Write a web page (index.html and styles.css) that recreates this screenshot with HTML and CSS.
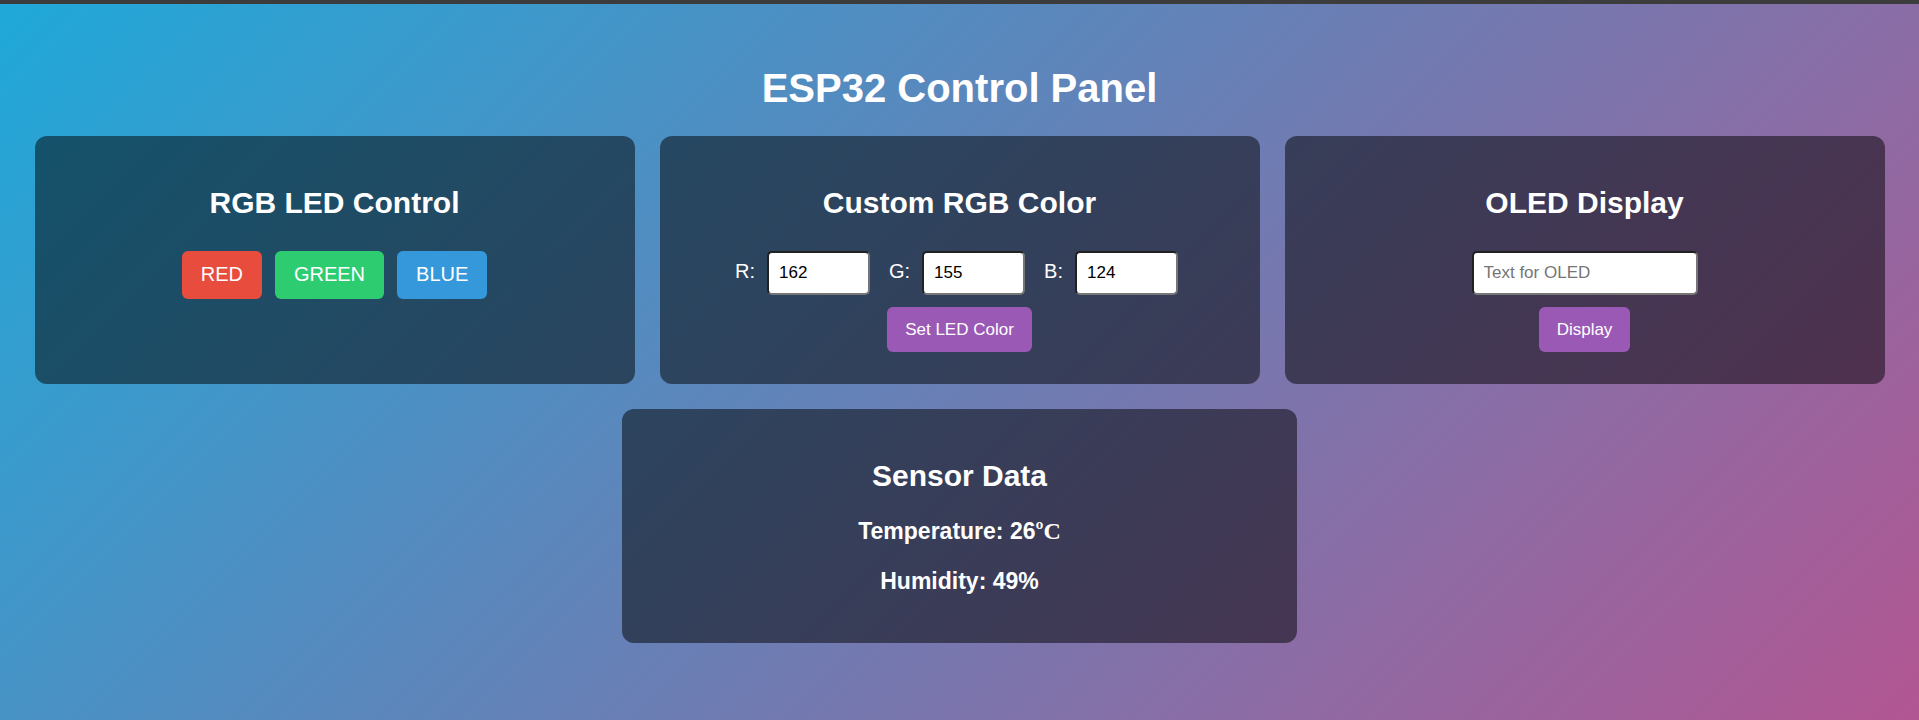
FILE: index.html
```html
<!DOCTYPE html>
<html lang="en">
<head>
<meta charset="utf-8">
<meta name="viewport" content="width=device-width, initial-scale=1">
<title>ESP32 Control Panel</title>
<link rel="stylesheet" href="styles.css">
</head>
<body>
<main class="page">
  <h1 class="title">ESP32 Control Panel</h1>
  <div class="cards">
    <section class="card">
      <h2 class="card-title">RGB LED Control</h2>
      <div class="led-buttons">
        <button type="button" class="button button-led red">RED</button>
        <button type="button" class="button button-led green">GREEN</button>
        <button type="button" class="button button-led blue">BLUE</button>
      </div>
    </section>
    <section class="card">
      <h2 class="card-title">Custom RGB Color</h2>
      <form class="form">
        <div class="channels">
          <div class="channel"><label for="r">R:</label><input class="field field-channel" id="r" type="text" inputmode="numeric" value="162"></div>
          <div class="channel"><label for="g">G:</label><input class="field field-channel" id="g" type="text" inputmode="numeric" value="155"></div>
          <div class="channel"><label for="b">B:</label><input class="field field-channel" id="b" type="text" inputmode="numeric" value="124"></div>
        </div>
        <button type="button" class="button button-action">Set LED Color</button>
      </form>
    </section>
    <section class="card">
      <h2 class="card-title">OLED Display</h2>
      <form class="form">
        <input class="field field-text" type="text" placeholder="Text for OLED" aria-label="Text for OLED">
        <button type="button" class="button button-action">Display</button>
      </form>
    </section>
  </div>
  <section class="card sensor">
    <h2 class="card-title">Sensor Data</h2>
    <h3 class="reading">Temperature: 26<span class="unit">ºC</span></h3>
    <h3 class="reading">Humidity: 49%</h3>
  </section>
</main>
</body>
</html>
```
FILE: styles.css
```css
* {
  box-sizing: border-box;
}

body {
  margin: 0;
  min-height: 100vh;
  border-top: 4px solid #3c3c3c;
  background: linear-gradient(135deg, #1fa9d9, #b25692) border-box no-repeat;
  color: #fff;
  font-family: "Liberation Sans", Arial, sans-serif;
  font-size: 20px;
}

.page {
  display: flex;
  flex-direction: column;
  align-items: center;
  gap: 25px;
  padding: 61px 25px 25px;
}

.title {
  margin: 0;
  font-size: 40px;
  line-height: 46px;
}

.cards {
  display: grid;
  grid-template-columns: repeat(auto-fit, minmax(min(100%, 500px), 1fr));
  gap: 25px;
  width: 100%;
  max-width: 1850px;
}

.card {
  padding: 50px 25px 32px;
  border-radius: 12px;
  background: rgba(0, 0, 0, 0.5);
  text-align: center;
}

.card-title {
  margin: 0;
  font-size: 30px;
  line-height: 34px;
}

.led-buttons {
  display: flex;
  flex-wrap: wrap;
  justify-content: center;
  gap: 13px;
  margin-top: 31px;
}

.button {
  border: 0;
  border-radius: 6px;
  color: #fff;
  font-family: inherit;
  cursor: pointer;
}

.button-led {
  padding: 12px 19px 13px;
  font-size: 20px;
  line-height: 23px;
}

.button-action {
  padding: 12px 18px;
  background: #9b59b6;
  font-size: 17px;
  line-height: 21px;
}

.red {
  background: #e74c3c;
}

.green {
  background: #2ecc71;
}

.blue {
  background: #3498db;
}

.form {
  display: flex;
  flex-direction: column;
  align-items: center;
  gap: 12px;
  margin-top: 31px;
}

.channels {
  display: flex;
  flex-wrap: wrap;
  justify-content: center;
  gap: 12px 19px;
  padding-right: 6px;
}

.channel {
  display: flex;
  align-items: baseline;
  gap: 12px;
}

.field {
  height: 44px;
  padding: 0 10px;
  border: 2px inset #767676;
  border-radius: 5px;
  background: #fff;
  color: #000;
  font-family: inherit;
  font-size: 17px;
}

.field::placeholder {
  color: #757575;
}

.field-channel {
  width: 103px;
}

.field-text {
  width: 226px;
  max-width: 100%;
}

.sensor {
  width: 675px;
  max-width: 100%;
  padding-bottom: 49px;
}

.reading {
  margin: 25px 0 0;
  font-size: 23px;
  line-height: 26px;
}

.reading + .reading {
  margin-top: 24px;
}

.unit {
  font-family: "Liberation Serif", serif;
  font-size: 24px;
  line-height: 1;
}
```
